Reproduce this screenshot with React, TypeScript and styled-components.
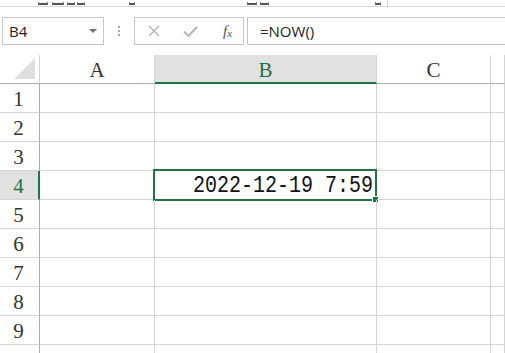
import styled, { createGlobalStyle, css } from 'styled-components';

const GREEN = '#217346';
const GRID = '#d4d4d4';
const HEAD_LINE = '#ababab';
const SELECTED_FILL = '#e1e1e1';

const COLUMNS = ['A', 'B', 'C', ''];
// the last row only peeks in at the bottom edge, its number is out of view
const ROWS = [1, 2, 3, 4, 5, 6, 7, 8, 9, 10];
const VISIBLE_LABELS = 9;

// cropped bottoms of the ribbon labels above the formula bar
const RIBBON_SCRAPS = [
  { left: 38, width: 10 },
  { left: 4, width: 12 },
  { left: 3, width: 8 },
  { left: 2, width: 8 },
  { left: 44, width: 6 },
  { left: 112, width: 10 },
  { left: 3, width: 9 },
  { left: 106, width: 6 },
];

const GlobalStyle = createGlobalStyle`
  html, body {
    margin: 0;
    padding: 0;
    background: #ffffff;
    overflow: hidden;
  }
  body {
    font-family: 'Open Sans', 'Liberation Sans', sans-serif;
  }
`;

function App() {
  return (
    <>
      <GlobalStyle />
      <Window>
        <RibbonEdge>
          {RIBBON_SCRAPS.map((s, i) => (
            <RibbonScrap key={i} style={{ marginLeft: s.left, width: s.width }} />
          ))}
          <RibbonDivider />
        </RibbonEdge>

        <FormulaBar>
          <NameBox>
            <NameText>B4</NameText>
            <svg width="8" height="5" viewBox="0 0 8 5">
              <path d="M0 0 L8 0 L4 4 Z" fill="#707070" />
            </svg>
          </NameBox>
          <Grip>
            <Dot />
            <Dot />
            <Dot />
          </Grip>
          <ButtonBox>
            <IconButton>
              <svg width="12" height="12" viewBox="0 0 12 12">
                <path
                  d="M1 1 L11 11 M11 1 L1 11"
                  stroke="#b4b4b4"
                  strokeWidth="1.4"
                />
              </svg>
            </IconButton>
            <IconButton>
              <svg width="15" height="11" viewBox="0 0 15 11">
                <path
                  d="M1 5.5 L5.5 10 L14 1"
                  stroke="#b4b4b4"
                  strokeWidth="2"
                  fill="none"
                />
              </svg>
            </IconButton>
            <FxLabel>
              f<sub>x</sub>
            </FxLabel>
          </ButtonBox>
          <FormulaInput>=NOW()</FormulaInput>
        </FormulaBar>

        <Sheet>
          <CornerCell>
            <svg width="22" height="22" viewBox="0 0 22 22">
              <path d="M21 0 L21 21 L0 21 Z" fill="#dfdfdf" />
            </svg>
          </CornerCell>
          {COLUMNS.map((col, i) => (
            <ColumnHeader key={i} selected={col === 'B'}>
              {col}
            </ColumnHeader>
          ))}

          {ROWS.map((row) => (
            <Row key={row}>
              <RowHeader selected={row === 4}>
                {row <= VISIBLE_LABELS ? row : null}
              </RowHeader>
              {COLUMNS.map((col, i) => (
                <Cell key={i}>
                  {row === 4 && col === 'B' && (
                    <>
                      <CellValue>2022-12-19 7:59</CellValue>
                      <Selection>
                        <FillHandle />
                      </Selection>
                    </>
                  )}
                </Cell>
              ))}
            </Row>
          ))}
        </Sheet>
      </Window>
    </>
  );
}

const Window = styled.div`
  width: 505px;
  height: 353px;
  overflow: hidden;
  display: flex;
  flex-direction: column;

  & > * {
    flex: none;
  }
`;

const RibbonEdge = styled.div`
  height: 6px;
  border-bottom: 1px solid ${GRID};
  display: flex;
  align-items: flex-end;
  overflow: hidden;
`;

const RibbonScrap = styled.span`
  height: 3px;
  margin-bottom: 1px;
  flex: none;
  border-bottom: 2px solid #555;
  border-left: 1px solid #777;
  border-right: 1px solid #777;
  box-sizing: border-box;
`;

const RibbonDivider = styled.span`
  width: 1px;
  height: 6px;
  margin-left: 6px;
  background: #d8d8d8;
`;

const FormulaBar = styled.div`
  display: flex;
  align-items: center;
  height: 28px;
  margin-top: 10px;
  padding-left: 2px;
`;

const boxed = css`
  box-sizing: border-box;
  height: 28px;
  border: 1px solid #c6c6c6;
  background: #ffffff;
`;

const NameBox = styled.div`
  ${boxed};
  width: 102px;
  display: flex;
  align-items: center;
  justify-content: space-between;
  padding: 0 6px 0 6px;
`;

const NameText = styled.span`
  font-size: 15px;
  color: #222;
`;

const Grip = styled.div`
  width: 30px;
  display: flex;
  flex-direction: column;
  align-items: center;
  gap: 2px;
`;

const Dot = styled.span`
  width: 2px;
  height: 2px;
  background: #a8a8a8;
`;

const ButtonBox = styled.div`
  ${boxed};
  width: 110px;
  display: flex;
  align-items: center;
  padding-left: 13px;
  gap: 23px;
`;

const IconButton = styled.span`
  display: flex;
  align-items: center;
  justify-content: center;
`;

const FxLabel = styled.span`
  font-family: 'Liberation Serif', serif;
  font-style: italic;
  font-size: 15px;
  color: #555;
  margin-left: 2px;

  sub {
    font-size: 11px;
    vertical-align: -1px;
  }
`;

const FormulaInput = styled.div`
  ${boxed};
  flex: 1;
  margin-left: 3px;
  border-right: none;
  padding-left: 12px;
  display: flex;
  align-items: center;
  font-size: 15px;
  color: #222;
`;

const Sheet = styled.div`
  margin-top: 10px;
  display: grid;
  grid-template-columns: 40px 115px 222px 114px 1fr;
  grid-auto-rows: 29px;
`;

const Row = styled.div`
  display: contents;
`;

const CornerCell = styled.div`
  box-sizing: border-box;
  border-right: 1px solid ${GRID};
  border-bottom: 1px solid ${HEAD_LINE};
  display: flex;
  align-items: flex-end;
  justify-content: flex-end;
  padding: 0 3px 3px 0;
`;

const ColumnHeader = styled.div<{ selected?: boolean }>`
  box-sizing: border-box;
  border-right: 1px solid ${GRID};
  border-bottom: ${(p) =>
    p.selected ? `2px solid ${GREEN}` : `1px solid ${HEAD_LINE}`};
  background: ${(p) => (p.selected ? SELECTED_FILL : '#ffffff')};
  color: ${(p) => (p.selected ? GREEN : '#333')};
  font-family: 'Liberation Serif', serif;
  font-size: 21px;
  display: flex;
  align-items: center;
  justify-content: center;
  padding-top: 3px;
`;

const RowHeader = styled.div<{ selected?: boolean }>`
  box-sizing: border-box;
  border-right: ${(p) =>
    p.selected ? `2px solid ${GREEN}` : `1px solid ${HEAD_LINE}`};
  border-bottom: 1px solid ${GRID};
  background: ${(p) => (p.selected ? SELECTED_FILL : '#ffffff')};
  color: ${(p) => (p.selected ? GREEN : '#333')};
  font-family: 'Liberation Serif', serif;
  font-size: 21px;
  display: flex;
  align-items: center;
  justify-content: center;
  padding: 2px ${(p) => (p.selected ? 1 : 2)}px 0 0;
`;

const Cell = styled.div`
  box-sizing: border-box;
  position: relative;
  border-right: 1px solid ${GRID};
  border-bottom: 1px solid ${GRID};
  display: flex;
  align-items: center;
  justify-content: flex-end;
`;

const CellValue = styled.span`
  font-family: 'Liberation Mono', 'DejaVu Sans Mono', monospace;
  font-size: 20px;
  color: #111;
  padding-right: 3px;
  display: inline-block;
  transform: scaleY(1.2);
`;

const Selection = styled.div`
  position: absolute;
  top: -2px;
  left: -2px;
  right: -1px;
  bottom: -2px;
  border: 2px solid ${GREEN};
  pointer-events: none;
`;

const FillHandle = styled.span`
  position: absolute;
  right: -3px;
  bottom: -3px;
  width: 5px;
  height: 5px;
  background: ${GREEN};
  border-left: 1px solid #ffffff;
  border-top: 1px solid #ffffff;
`;

export default App;
